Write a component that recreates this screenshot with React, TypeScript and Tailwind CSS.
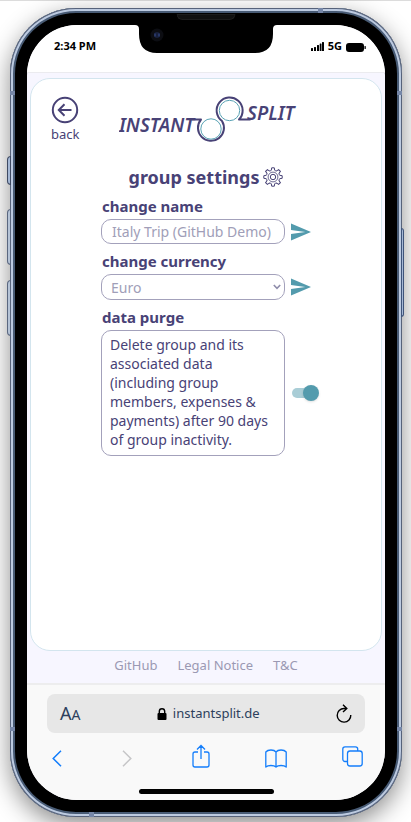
import React from "react";

function Logo() {
  return (
    <svg viewBox="0 0 178 50" className="h-[50px] w-[178px]" role="img" aria-label="Instant Split">
      <g fill="none" stroke="#484276" strokeWidth="2" strokeLinecap="round" strokeLinejoin="round">
        <path d="M73 24.500H82A13 13 0 1 0 103 26A13 13 0 1 1 120 24.500H131" />
      </g>
      <g fill="none" stroke="#5aa3b5" strokeWidth="1">
        <circle cx="92" cy="34" r="10.200" />
        <circle cx="110.500" cy="15.500" r="10.200" />
      </g>
      <g
        fill="#484276"
        fontFamily='"Noto Sans", sans-serif'
        fontStyle="italic"
        fontWeight="600"
        fontSize="19"
      >
        <text x="0" y="37">INSTANT</text>
        <text x="128" y="25">SPLIT</text>
      </g>
    </svg>
  );
}

function Gear() {
  const teeth = [0, 45, 90, 135, 180, 225, 270, 315];
  return (
    <svg viewBox="0 0 20 20" className="size-5" fill="none" stroke="#484276" strokeWidth="1" aria-hidden="true">
      {teeth.map((angle) => (
        <path
          key={angle}
          transform={`rotate(${angle} 10 10)`}
          d="M7.400 3.700L8.300 3.300L8.700 0.800H11.300L11.700 3.300L12.600 3.700"
        />
      ))}
      <circle cx="10" cy="10" r="4.900" strokeWidth="0.800" />
      <circle cx="10" cy="10" r="2.700" />
    </svg>
  );
}

function SendButton({ label }: { label: string }) {
  return (
    <button type="submit" aria-label={label} className="flex items-center">
      <svg viewBox="0 0 21 18" className="h-[18px] w-[21px]" fill="#539bad" aria-hidden="true">
        <path d="M0 18L21 9L0 0V7L15 9L0 11Z" />
      </svg>
    </button>
  );
}

function StatusBar() {
  return (
    <header className="flex h-12 items-center justify-between border-b border-[#ebebef] bg-white pr-[19px] pb-1 pl-[27px] text-[11px] font-bold text-black">
      <span>2:34 PM</span>
      <div className="flex items-center gap-1">
        <svg viewBox="0 0 13 9" className="h-[9px] w-[13px]" aria-hidden="true">
          <rect x="0" y="6" width="2" height="3" rx="0.500" />
          <rect x="3" y="5" width="2" height="4" rx="0.500" />
          <rect x="6" y="3" width="2" height="6" rx="0.500" />
          <rect x="8.700" y="1.500" width="1.800" height="7.500" rx="0.500" />
          <rect x="11" y="0" width="2" height="9" rx="0.500" />
        </svg>
        <span>5G</span>
        <svg viewBox="0 0 20 10" className="h-[10px] w-5" aria-hidden="true">
          <rect width="18" height="9" y="1" rx="3" />
          <rect x="18.500" y="4" width="1.300" height="3" rx="0.600" />
        </svg>
      </div>
    </header>
  );
}

function Settings() {
  return (
    <section className="flex flex-1 flex-col rounded-[20px] border border-[#d3e5ee] bg-white text-[#484276]">
      <div className="relative flex justify-center pt-4 pl-1">
        <a href="#back" className="absolute top-[17px] left-5 flex flex-col items-center text-[13px] leading-5">
          <svg viewBox="0 0 28 28" className="size-7" fill="none" stroke="#484276" strokeWidth="2" aria-hidden="true">
            <circle cx="14" cy="14" r="12.200" />
            <path d="M20.500 14H8M13.500 8.300L7.800 14L13.500 19.700" />
          </svg>
          back
        </a>
        <Logo />
      </div>
      <h1 className="mt-5 flex h-6 items-center justify-center gap-1 text-[18px] font-bold">
        group settings
        <Gear />
      </h1>
      <div className="mx-auto mt-[5px] grid grid-cols-[184px_20px] gap-x-[6px] text-[14px]">
        <form className="contents" onSubmit={(e) => e.preventDefault()}>
          <label htmlFor="name" className="col-span-2 h-[25px] pl-px text-[15px] leading-6 font-bold">
            change name
          </label>
          <input
            id="name"
            type="text"
            defaultValue="Italy Trip (GitHub Demo)"
            className="h-[25px] w-full rounded-[10px] border border-[#a3a1bb] bg-white pr-1 pl-[10px] text-[#a09eb8] outline-none"
          />
          <SendButton label="save name" />
        </form>
        <form className="contents" onSubmit={(e) => e.preventDefault()}>
          <label htmlFor="currency" className="col-span-2 mt-[5px] h-[25px] pl-px text-[15px] leading-6 font-bold">
            change currency
          </label>
          <div className="grid">
            <select
              id="currency"
              className="col-start-1 row-start-1 h-[26px] w-full appearance-none rounded-[10px] border border-[#a3a1bb] bg-white pl-[9px] text-[#a09eb8] outline-none"
            >
              <option>Euro</option>
            </select>
            <svg
              viewBox="0 0 8 6"
              className="pointer-events-none col-start-1 row-start-1 mr-1 h-[6px] w-2 self-center justify-self-end"
              fill="none"
              stroke="#8f8dab"
              strokeWidth="1.600"
              aria-hidden="true"
            >
              <path d="M0.800 1L4 4.300L7.200 1" />
            </svg>
          </div>
          <SendButton label="save currency" />
        </form>
        <label htmlFor="purge" className="col-span-2 mt-[5px] h-[25px] pl-px text-[15px] leading-6 font-bold">
          data purge
        </label>
        <p className="rounded-[10px] border border-[#a3a1bb] px-2 pt-1 pb-[6px] leading-[19px]">
          Delete group and its associated data (including group members, expenses &amp; payments) after 90 days of
          group inactivity.
        </p>
        <input
          id="purge"
          type="checkbox"
          role="switch"
          defaultChecked
          className="ml-px flex h-4 w-[27px] appearance-none items-center self-center before:h-[10px] before:w-6 before:rounded-full before:bg-[#a9cdd6] after:-ml-[13px] after:size-4 after:shrink-0 after:rounded-full after:bg-[#539bad] after:shadow-sm"
        />
      </div>
    </section>
  );
}

function BrowserBar() {
  return (
    <div className="border-t-2 border-[#ededee] bg-[#f9f9f9] px-5 pt-[9px] pb-[6px]">
      <div className="flex h-[39px] items-center justify-between rounded-lg bg-[#e7e7e7] pr-[13px] pl-[13px] text-[#2d3f5c]">
        <button aria-label="text size" className="flex items-baseline text-[18px]">
          A<span className="text-[14px]">A</span>
        </button>
        <div className="flex items-center gap-[6px] text-[13px]">
          <svg viewBox="0 0 10 12" className="h-3 w-[10px]" aria-hidden="true">
            <rect x="0.500" y="5" width="9" height="7" rx="1" fill="#000" />
            <path d="M2.300 5.500V3.500A2.700 2.700 0 0 1 7.700 3.500V5.500" fill="none" stroke="#000" strokeWidth="1.400" />
          </svg>
          instantsplit.de
        </div>
        <button aria-label="reload">
          <svg viewBox="0 0 16 19" className="h-[19px] w-4" fill="none" stroke="#000" strokeWidth="1.400" aria-hidden="true">
            <path d="M14.800 11A6.800 6.800 0 1 1 8 4.500H10.500M7 0.800L10.800 4.500L7 8" />
          </svg>
        </button>
      </div>
      <nav className="mt-[11px] mr-[2px] ml-[5px] flex h-7 items-center justify-between text-[#147efb]">
        <div className="flex gap-[60px]">
          <button aria-label="previous page">
            <svg viewBox="0 0 10 17" className="h-[17px] w-[10px]" fill="none" stroke="currentColor" strokeWidth="1.500" aria-hidden="true">
              <path d="M9 0.800L1.200 8.500L9 16.200" />
            </svg>
          </button>
          <button aria-label="next page" className="text-[#c6c6c8]">
            <svg viewBox="0 0 10 17" className="h-[17px] w-[10px]" fill="none" stroke="currentColor" strokeWidth="1.500" aria-hidden="true">
              <path d="M1 0.800L8.800 8.500L1 16.200" />
            </svg>
          </button>
        </div>
        <div className="flex items-center gap-[55px]">
          <button aria-label="share">
            <svg viewBox="0 0 18 24" className="mb-1 h-6 w-[18px]" fill="none" stroke="currentColor" strokeWidth="1.300" aria-hidden="true">
              <path d="M6 8H3A2 2 0 0 0 1 10V21A2 2 0 0 0 3 23H15A2 2 0 0 0 17 21V10A2 2 0 0 0 15 8H12M9 15V1.500M5 5.500L9 1.500L13 5.500" />
            </svg>
          </button>
          <button aria-label="bookmarks">
            <svg viewBox="0 0 22 19" className="h-[19px] w-[22px]" fill="none" stroke="currentColor" strokeWidth="1.300" strokeLinejoin="round" aria-hidden="true">
              <path d="M11 3V18M11 3C9 0.300 3 0.300 0.800 3V18C3 16 9 16 11 18C13 16 19 16 21.200 18V3C19 0.300 13 0.300 11 3" />
            </svg>
          </button>
          <button aria-label="tabs">
            <svg viewBox="0 0 21 21" className="mb-1 size-[21px]" fill="none" stroke="currentColor" strokeWidth="1.300" aria-hidden="true">
              <rect x="5.500" y="5" width="14.700" height="15" rx="2.500" />
              <path d="M5.500 15.500H3A2.200 2.200 0 0 1 0.800 13.300V3A2.200 2.200 0 0 1 3 0.800H13.500A2.200 2.200 0 0 1 15.700 3V5" />
            </svg>
          </button>
        </div>
      </nav>
      <div className="mx-auto mt-[17px] h-[5px] w-[135px] rounded-full bg-black" />
    </div>
  );
}

function Notch() {
  return (
    <div aria-hidden="true">
      <svg viewBox="0 0 142 28" className="absolute top-[17px] left-1/2 h-7 w-[142px] -translate-x-1/2">
        <path d="M0 0Q4 0 4 4V9Q4 28 22 28H120Q138 28 138 9V4Q138 0 142 0Z" fill="#000" />
        <circle cx="22" cy="10" r="6.500" fill="#0c0d12" />
        <circle cx="22" cy="10" r="3" fill="#18203c" />
        <path d="M20 8.500V11.500M24 8.500V11.500" stroke="#344681" strokeWidth="1.200" />
      </svg>
      <div className="absolute top-[6px] left-1/2 h-[6px] w-[59px] -translate-x-1/2 rounded-b-md border border-[#1c1c1c] bg-[#101010]" />
    </div>
  );
}

export default function App() {
  return (
    <div className="flex min-h-screen flex-col border-t border-[#dcdcdc] bg-white pt-[7px] pr-[9px] pb-[5px] pl-[10px] font-['Noto_Sans',sans-serif]">
      <div className="relative flex flex-1 flex-col rounded-[66px] bg-black p-[17px] shadow-[inset_0_0_0_1px_#56627a,inset_0_0_0_3px_#bccae0,inset_0_0_0_5px_#485b75,0_8px_24px_rgba(0,0,0,0.45)]">
        <span className="absolute top-[148px] -left-[3px] h-[29px] w-1 rounded-l-sm border border-[#3e4a63] bg-[#a5b8d5]" />
        <span className="absolute top-[201px] -left-[3px] h-[56px] w-1 rounded-l-sm border border-[#5a677f] bg-[#b5c3d6]" />
        <span className="absolute top-[272px] -left-[3px] h-[56px] w-1 rounded-l-sm border border-[#5a677f] bg-[#b5c3d6]" />
        <span className="absolute top-[220px] -right-[2px] h-[89px] w-[3px] rounded-r-sm border border-[#3f547a] bg-[#a5b8d5]" />
        <span className="absolute top-[83px] left-0 h-1 w-[5px] bg-[#7687a8]" />
        <span className="absolute top-[83px] right-0 h-1 w-[5px] bg-[#7687a8]" />
        <span className="absolute bottom-[86px] left-0 h-1 w-[5px] bg-[#7687a8]" />
        <span className="absolute right-0 bottom-[86px] h-1 w-[5px] bg-[#7687a8]" />
        <span className="absolute top-0 right-[79px] h-[5px] w-[5px] bg-[#7687a8]" />
        <span className="absolute bottom-0 left-[79px] h-[5px] w-[5px] bg-[#7687a8]" />
        <div className="flex flex-1 flex-col overflow-hidden rounded-[50px] bg-[#f7f6ff]">
          <StatusBar />
          <main className="flex flex-1 flex-col px-[3px] pt-[5px]">
            <Settings />
            <footer className="flex h-8 items-center justify-center gap-5 pb-[3px] text-[13px] text-[#9b99b3]">
              <a href="#github">GitHub</a>
              <a href="#legal">Legal Notice</a>
              <a href="#terms">T&amp;C</a>
            </footer>
          </main>
          <BrowserBar />
        </div>
        <Notch />
      </div>
    </div>
  );
}
